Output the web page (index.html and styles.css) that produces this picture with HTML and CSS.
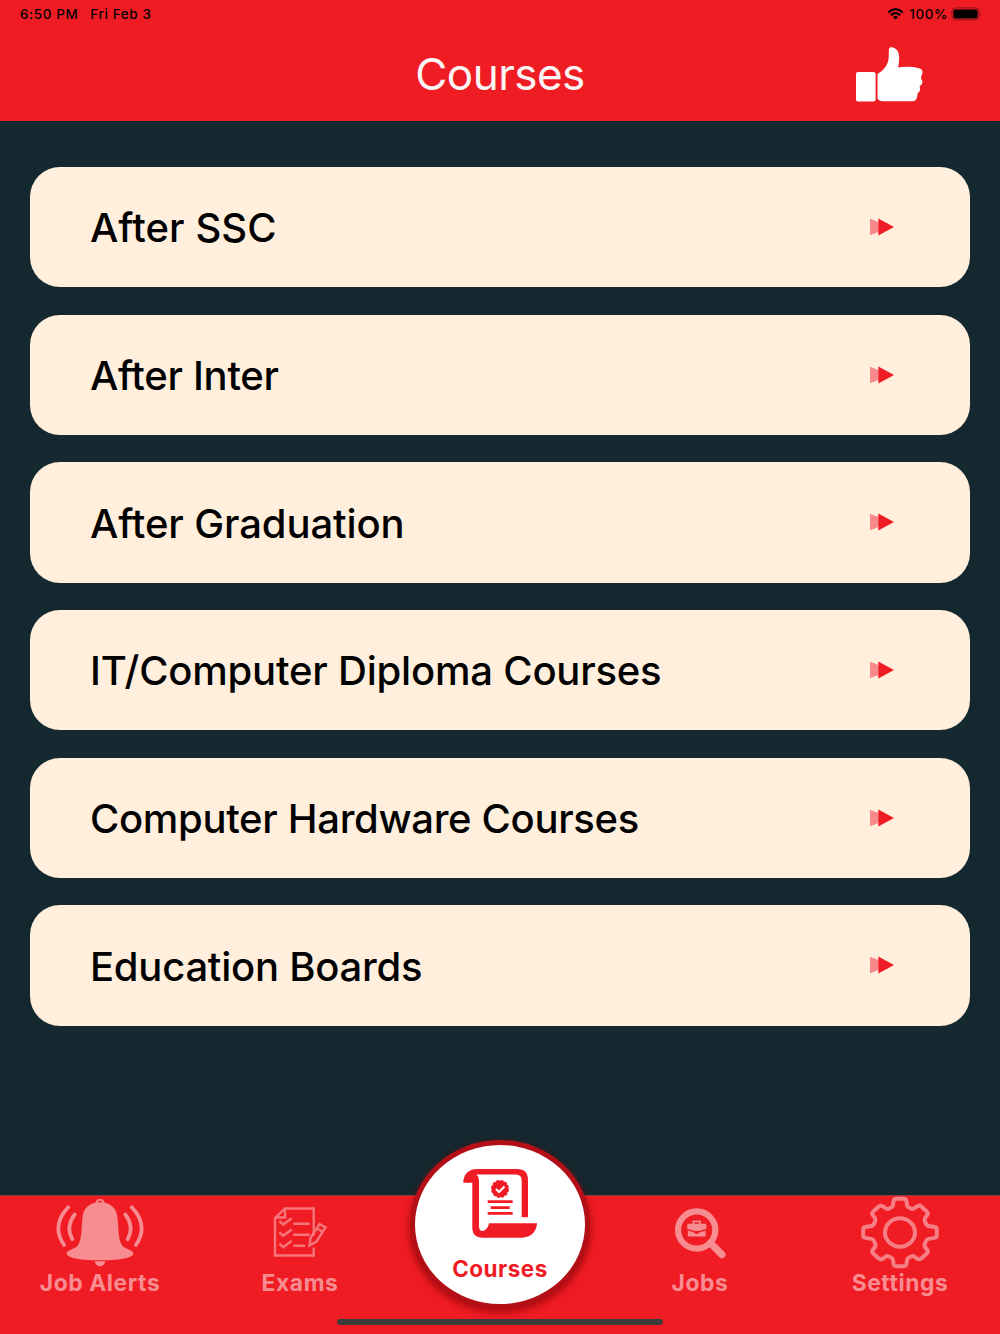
FILE: index.html
```
<!DOCTYPE html>
<html lang="en">
<head>
    <meta charset="UTF-8">
    <meta name="viewport" content="width=device-width, initial-scale=1.0">
    <title>Courses</title>
    <link rel="stylesheet" href="styles.css">
</head>
<body>

    <!-- Arrow shared by all the course rows -->
    <svg class="defs" width="0" height="0">
        <symbol id="arrow" viewBox="0 0 24 18">
            <path d="M0 0.8 L8.5 4 V14 L0 17.2 Z" fill="#f7898c"/>
            <path d="M8.3 0.6 L24 9 L8.3 17.4 Z" fill="#ef1c25"/>
        </symbol>
    </svg>

    <div class="status-bar">
        <div class="status-left">
            <span class="time">6:50 PM</span>
            <span class="date">Fri Feb 3</span>
        </div>
        <div class="status-right">
            <svg width="17" height="12" viewBox="0 0 17 12" fill="none" stroke="#000" stroke-width="2.1">
                <path d="M1.2 4.4 Q8.5 -2 15.8 4.4"/>
                <path d="M3.8 7.1 Q8.5 3 13.2 7.1"/>
                <path d="M8.5 11.4 L5.9 8.9 Q8.5 7 11.1 8.9 Z" fill="#000" stroke="none"/>
            </svg>
            <span class="percent">100%</span>
            <svg width="31" height="14" viewBox="0 0 31 14">
                <rect x="0.9" y="0.9" width="27.2" height="12" rx="3.6" fill="none" stroke="#8b1117" stroke-width="1"/>
                <rect x="2.4" y="2.6" width="24.2" height="8.8" rx="2" fill="#000"/>
                <path d="M29.3 5 Q31 7 29.3 9 Z" fill="#8b1117"/>
            </svg>
        </div>
    </div>

    <div class="header">
        <h1>Courses</h1>
        <svg class="like" width="80" height="66" viewBox="0 0 80 66" fill="#fff">
            <rect x="6" y="30" width="19.6" height="29.4" rx="2"/>
            <path d="M27.5 33 Q27.5 31.6 29 31 C33 28.5 36 25 37.5 21 C39.5 16 38.5 11 39 7 C39.4 4.6 43 5 45.5 6.8 C49.5 10 50 15 48.2 25.4 Q60 24 69 26.2 C72.5 27 73.3 30 72 32.5 Q71 34.5 71 37 C73.5 39 72.5 42.8 69.5 44 C71 48 69.5 50.5 67.5 51 C67.8 54 66.5 59.3 63 59.3 H33 C30.5 59.3 27.5 58 27.5 55.5 Z"/>
        </svg>
    </div>

    <!-- Course list -->
    <div class="courses">
        <div class="course">
            <span class="ssc">After SSC</span>
            <svg class="arrow"><use href="#arrow"/></svg>
        </div>
        <div class="course">
            <span class="inter">After Inter</span>
            <svg class="arrow"><use href="#arrow"/></svg>
        </div>
        <div class="course">
            <span class="graduation">After Graduation</span>
            <svg class="arrow"><use href="#arrow"/></svg>
        </div>
        <div class="course">
            <span class="diploma">IT/Computer Diploma Courses</span>
            <svg class="arrow"><use href="#arrow"/></svg>
        </div>
        <div class="course">
            <span class="hardware">Computer Hardware Courses</span>
            <svg class="arrow"><use href="#arrow"/></svg>
        </div>
        <div class="course">
            <span class="boards">Education Boards</span>
            <svg class="arrow"><use href="#arrow"/></svg>
        </div>
    </div>

    <!-- Bottom tabs -->
    <div class="tab-bar">
        <div class="tab">
            <svg width="102" height="76" viewBox="0 0 101.4 76" fill="none" stroke="#f78c91" stroke-width="3.8" stroke-linecap="round">
                <path d="M17.5 11.7 Q-0.5 31 13.3 51"/>
                <path d="M24.3 19.3 Q14.5 32 22 45"/>
                <path d="M83.9 11.7 Q101.9 31 88.1 51"/>
                <path d="M77.1 19.3 Q86.9 32 79.4 45"/>
                <path d="M46.7 9 Q46.7 4 50.7 4 Q54.7 4 54.7 9" stroke-width="2"/>
                <path d="M50.7 6.5 C39 6.5 33.5 13.5 32.5 22 C31.3 32 32 44 28 51 C25 55.5 16 56 16 60 C16 64.5 33 67 50.7 67 C68.4 67 85.4 64.5 85.4 60 C85.4 56 76.4 55.5 73.4 51 C69.4 44 70.1 32 68.9 22 C67.9 13.5 62.4 6.5 50.7 6.5 Z" fill="#f78c91" stroke="none"/>
                <path d="M45 68 H56.4 Q54.9 73.2 50.7 73.2 Q46.5 73.2 45 68 Z" fill="#f78c91" stroke="none"/>
            </svg>
            <span>Job Alerts</span>
        </div>
        <div class="tab">
            <svg width="60" height="56" viewBox="0 0 60 56" fill="none" stroke="#f5757b" stroke-width="2.4">
                <path d="M43.7 31 V4 H15 L5 13.5 V51 H43.7 V43"/>
                <path d="M15 4 V13 H5"/>
                <path d="M9.3 16.7 L13.3 20 L21.7 13.7"/>
                <path d="M9.3 28 L13.3 31.3 L21.7 25"/>
                <path d="M9.3 39.3 L13.3 42.6 L21.7 36.3"/>
                <path d="M23.3 19.3 H39.7 M23.3 30.3 H39.7 M23.3 41.3 H35"/>
                <path d="M39.5 41 L40.5 33.5 L49.5 19.5 L55.5 23 L46.5 37 Z M47 24 L53 27.5"/>
            </svg>
            <span>Exams</span>
        </div>
        <div class="tab tab-active">
            <div class="bubble">
                <svg width="80" height="76" viewBox="0 0 80 76" fill="#ef1c25">
                    <path d="M3.3 17.8 C3.3 9.5 8.5 4 17 4 H57 Q68 4 68 15 V52.3 H61.7 V15.5 Q61.7 9.5 55.7 9.5 H16.5 Q19 12 19 17 V61.5 C19 68.5 27.5 67 29 58.3 H77 C76.5 66.5 71 72.7 62 72.7 H22 Q12.3 72.7 12.3 63 V17.8 Z"/>
                    <circle cx="40" cy="23.9" r="8.2" stroke="#ef1c25" stroke-width="1.6" stroke-dasharray="3.2 1.1"/>
                    <path d="M36 24 L39 27 L44.5 21.5" fill="none" stroke="#fff" stroke-width="2"/>
                    <path d="M27.7 36.7 H52.7 M30.7 42.7 H49.7 M27.7 48.3 H52.7" stroke="#ef1c25" stroke-width="2.7"/>
                </svg>
                <span>Courses</span>
            </div>
        </div>
        <div class="tab">
            <svg width="60" height="56" viewBox="0 0 60 56" fill="none" stroke="#f78c91">
                <circle cx="26.7" cy="25.5" r="18.6" stroke-width="6.2"/>
                <path d="M40.5 38.5 L51.8 50" stroke-width="7.4" stroke-linecap="round"/>
                <path d="M23.4 19.5 V16.9 H30 V19.5" stroke-width="1.8"/>
                <path d="M18.5 19.3 H35 Q36.3 19.3 36.3 20.5 V24.3 L29 26.6 H24.5 L17.2 24.3 V20.5 Q17.2 19.3 18.5 19.3 Z M17.8 26 L24 28 Q26.7 31 29.4 28 L35.6 26 V32 H17.8 Z" fill="#f78c91" stroke="none"/>
            </svg>
            <span>Jobs</span>
        </div>
        <div class="tab">
            <svg width="80" height="72" viewBox="0 0 80 72" fill="none" stroke="#f67f85" stroke-width="4" stroke-linejoin="round">
                <path d="M36 2.3 H44 Q46 2.3 46.4 4.5 L47 8.5 Q47.3 10.3 49 11 L51.5 12.2 Q53 12.9 54.7 11.7 L57.5 9.7 Q59.5 8.5 61.2 10 L67 15.3 Q68.4 16.8 67.2 18.5 L65 21.6 Q64 23 64.8 24.6 L66 27.5 Q66.7 29.2 68.5 29.5 L74.5 30.5 Q76.8 31 76.8 33 V39 Q76.8 41 74.5 41.4 L68.5 42.4 Q66.7 42.7 66 44.5 L64.8 47.5 Q64 49 65 50.5 L67.2 53.5 Q68.4 55.2 67 56.7 L61.2 62 Q59.5 63.5 57.5 62.3 L54.7 60.3 Q53 59.1 51.5 59.8 L49 61 Q47.3 61.7 47 63.5 L46.4 67.5 Q46 69.7 44 69.7 H36 Q34 69.7 33.6 67.5 L33 63.5 Q32.7 61.7 31 61 L28.5 59.8 Q27 59.1 25.3 60.3 L22.5 62.3 Q20.5 63.5 18.8 62 L13 56.7 Q11.6 55.2 12.8 53.5 L15 50.5 Q16 49 15.2 47.5 L14 44.5 Q13.3 42.7 11.5 42.4 L5.5 41.4 Q3.2 41 3.2 39 V33 Q3.2 31 5.5 30.5 L11.5 29.5 Q13.3 29.2 14 27.5 L15.2 24.6 Q16 23 15 21.6 L12.8 18.5 Q11.6 16.8 13 15.3 L18.8 10 Q20.5 8.5 22.5 9.7 L25.3 11.7 Q27 12.9 28.5 12.2 L31 11 Q32.7 10.3 33 8.5 L33.6 4.5 Q34 2.3 36 2.3 Z"/>
                <ellipse cx="40" cy="36" rx="15" ry="14.2"/>
            </svg>
            <span>Settings</span>
        </div>
        <div class="home-indicator"></div>
    </div>

</body>
</html>
```
FILE: styles.css
```
body {
    font-family: Inter, "Liberation Sans", sans-serif;
    background-color: #14282f;
    margin: 0;
    padding: 0;
    height: 1334px;
    display: flex;
    flex-direction: column;
    overflow: hidden;
}

svg {
    display: block;
    flex: none;
}

span {
    white-space: nowrap;
}

.defs {
    position: absolute;
}

.status-bar {
    display: flex;
    justify-content: space-between;
    box-sizing: border-box;
    height: 28px;
    padding: 0 18px 0 20px;
    background-color: #f01c24;
    font-size: 13.4px;
    font-weight: 500;
    letter-spacing: 0.65px;
    line-height: 28px;
}

.status-left,
.status-right {
    display: flex;
    align-items: center;
}

.status-left {
    gap: 12px;
}

.status-right {
    gap: 5px;
}

.status-right .percent {
    margin-right: -2px;
}

.header {
    display: flex;
    align-items: center;
    justify-content: center;
    position: relative;
    height: 92.5px;
    flex: none;
    background-color: #f01c24;
}

.header h1 {
    margin: 0;
    color: #fbf5f5;
    font-size: 44px;
    font-weight: 400;
    letter-spacing: -0.5px;
    line-height: 92px;
}

.like {
    position: absolute;
    right: 70px;
    top: 14px;
}

.courses {
    display: flex;
    flex-direction: column;
    gap: 27.2px;
    padding: 46.4px 30px 0;
    flex: 1;
}

.course {
    display: flex;
    align-items: center;
    justify-content: space-between;
    box-sizing: border-box;
    height: 120.5px;
    padding: 0 76px 0 60px;
    background-color: #ffefdc;
    border-radius: 30px;
    color: #000;
    font-size: 40px;
    font-weight: 500;
}

.course span {
    padding-top: 1px;
}

.course .ssc {
    letter-spacing: 0.1px;
}

.course .inter {
    letter-spacing: -0.3px;
}

.course .graduation {
    letter-spacing: -0.1px;
}

.course .diploma {
    letter-spacing: -0.2px;
}

.course .hardware {
    letter-spacing: -0.32px;
}

.course .boards {
    letter-spacing: -0.25px;
}

.arrow {
    width: 24px;
    height: 18px;
    margin-bottom: 0.6px;
}

.tab-bar {
    display: grid;
    grid-template-columns: repeat(5, 1fr);
    position: relative;
    box-sizing: border-box;
    height: 139px;
    flex: none;
    border-top: 1px solid #8f3a40;
    background-color: #f01c24;
}

.tab {
    display: flex;
    flex-direction: column;
    align-items: center;
    color: #f78c91;
    font-size: 22.8px;
    font-weight: 700;
    letter-spacing: 0.6px;
    line-height: 27px;
}

.tab svg {
    height: 73px;
}

.tab-active {
    color: #ef1c25;
}

/* White circle that rises out of the tab bar */
.bubble {
    display: flex;
    flex-direction: column;
    align-items: center;
    box-sizing: border-box;
    width: 180px;
    height: 169px;
    margin-top: -56px;
    padding-top: 20px;
    border: 5px solid #b30f16;
    border-radius: 50%;
    background-color: #fff;
    box-shadow: 0 3px 7px 1px rgba(130, 0, 5, 0.6);
}

.bubble svg {
    height: 76px;
}

.bubble span {
    margin-top: 14px;
    font-size: 22.5px;
    letter-spacing: 0.5px;
}

.home-indicator {
    position: absolute;
    left: 337px;
    bottom: 9px;
    width: 326px;
    height: 6px;
    border-radius: 3px;
    background-color: #3c3c3c;
}
```
